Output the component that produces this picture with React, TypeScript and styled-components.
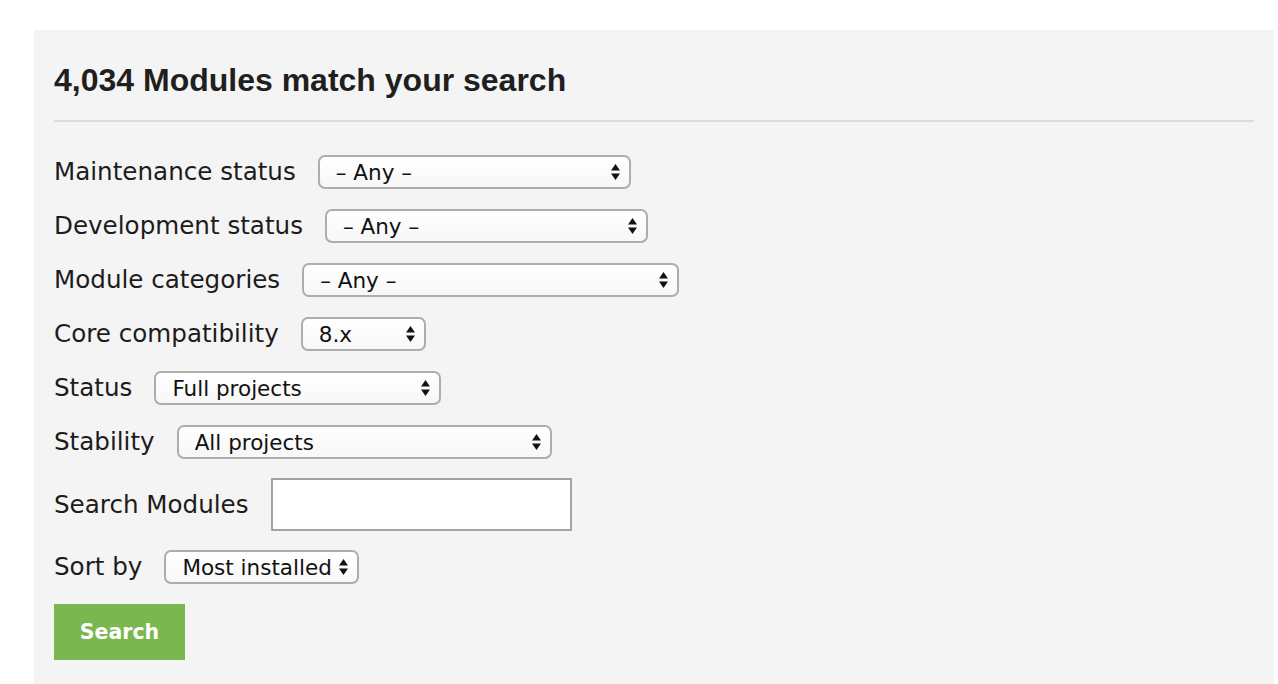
import styled, { createGlobalStyle } from "styled-components";

const GlobalStyle = createGlobalStyle`
    html, body {
        margin: 0;
        padding: 0;
        background: #ffffff;
    }
    body {
        font-family: "DejaVu Sans", "Liberation Sans", sans-serif;
        color: #1c1c1c;
    }
`;

// --- Styled Components ---

const Page = styled.div`
    padding: 30px 4px 0 34px;
`;

const Panel = styled.section`
    background: #f4f4f4;
    padding: 0 20px 40px 20px;
    min-height: 660px;
    box-sizing: border-box;
`;

const Heading = styled.h2`
    margin: 0;
    padding: 32px 0 22px 0;
    font-family: "Liberation Sans", Arial, sans-serif;
    font-weight: 700;
    font-size: 32px;
    line-height: 36px;
    color: #1f1f1f;
    border-bottom: 2px solid #dcdcdc;
`;

const Form = styled.form`
    display: flex;
    flex-direction: column;
    align-items: flex-start;
    gap: 20px;
    padding-top: 33px;
`;

const Row = styled.div`
    display: flex;
    align-items: center;
    gap: 22px;
`;

const Label = styled.label`
    font-size: 24.6px;
    line-height: 34px;
    color: #1c1c1c;
    white-space: nowrap;
`;

const SelectWrap = styled.div<{ $width: number }>`
    position: relative;
    width: ${({ $width }) => $width}px;
    height: 34px;
`;

const Select = styled.select`
    appearance: none;
    -webkit-appearance: none;
    width: 100%;
    height: 100%;
    box-sizing: border-box;
    border: 2px solid #adadad;
    border-radius: 7px;
    background: linear-gradient(#ffffff, #f7f7f7);
    padding: 0 20px 0 16px;
    font-family: "DejaVu Sans", "Liberation Sans", sans-serif;
    font-size: 21.5px;
    color: #111;
    outline: none;
`;

const Arrows = styled.svg`
    position: absolute;
    right: 11px;
    top: 9px;
    pointer-events: none;
`;

const TextInput = styled.input`
    width: 301px;
    height: 53px;
    box-sizing: border-box;
    border: 2px solid #a4a49c;
    background: #ffffff;
    font-size: 19px;
    padding: 0 8px;
    outline: none;
`;

const SearchRow = styled(Row)`
    margin-top: -1px;
    margin-bottom: -1px;
`;

const Button = styled.button`
    width: 131px;
    height: 56px;
    border: none;
    background: #7ab74f;
    color: #ffffff;
    font-family: "DejaVu Sans", "Liberation Sans", sans-serif;
    font-weight: 700;
    font-size: 20.5px;
    cursor: pointer;
`;

// --- Component ---

interface Filter {
    label: string;
    value: string;
    width: number;
}

const filters: Filter[] = [
    { label: "Maintenance status", value: "– Any –", width: 313 },
    { label: "Development status", value: "– Any –", width: 323 },
    { label: "Module categories", value: "– Any –", width: 377 },
    { label: "Core compatibility", value: "8.x", width: 125 },
    { label: "Status", value: "Full projects", width: 287 },
    { label: "Stability", value: "All projects", width: 375 },
];

function Dropdown({ value, width }: { value: string; width: number }) {
    return (
        <SelectWrap $width={width}>
            <Select defaultValue={value}>
                <option>{value}</option>
            </Select>
            <Arrows width="9" height="16" viewBox="0 0 9 16">
                <path d="M4.5 0 L9 6.5 H0 Z" fill="#111" />
                <path d="M0 9.5 H9 L4.5 16 Z" fill="#111" />
            </Arrows>
        </SelectWrap>
    );
}

export default function App() {
    return (
        <>
            <GlobalStyle />
            <Page>
                <Panel>
                    <Heading>4,034 Modules match your search</Heading>
                    <Form onSubmit={(e) => e.preventDefault()}>
                        {filters.map((f) => (
                            <Row key={f.label}>
                                <Label>{f.label}</Label>
                                <Dropdown value={f.value} width={f.width} />
                            </Row>
                        ))}
                        <SearchRow>
                            <Label>Search Modules</Label>
                            <TextInput type="text" />
                        </SearchRow>
                        <Row>
                            <Label>Sort by</Label>
                            <Dropdown value="Most installed" width={195} />
                        </Row>
                        <Button type="submit">Search</Button>
                    </Form>
                </Panel>
            </Page>
        </>
    );
}
